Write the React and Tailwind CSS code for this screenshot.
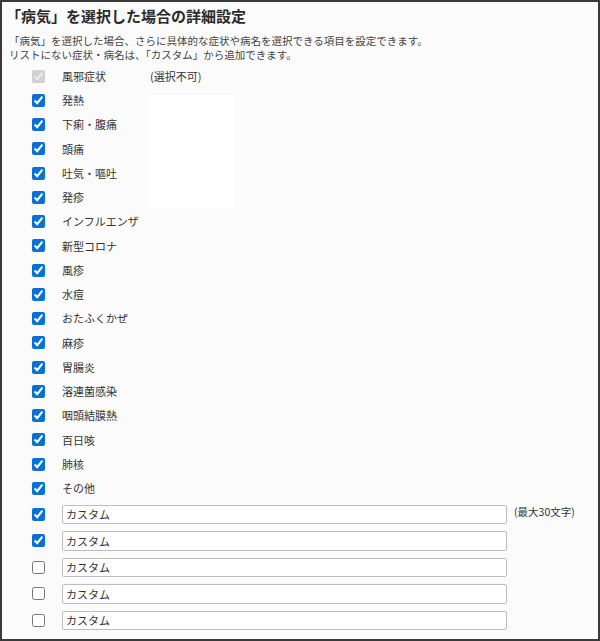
import React from 'react';

const symptoms = [
    '発熱', '下痢・腹痛', '頭痛', '吐気・嘔吐', '発疹', 'インフルエンザ', '新型コロナ',
    '風疹', '水痘', 'おたふくかぜ', '麻疹', '胃腸炎', '溶連菌感染', '咽頭結膜熱',
    '百日咳', '肺核', 'その他',
];

const customs = [true, true, false, false, false];

export default function App() {
    return (
        <div
            className="relative w-[600px] h-[641px] bg-[#fbfbfb] border-2 border-[#3a3a3a] text-[#333] overflow-hidden"
            style={{ fontFamily: '"Noto Sans CJK JP", "Noto Sans", sans-serif' }}
        >
            <div className="pl-[4px] pt-[4px]">
                <h1 className="text-[15px] font-bold leading-[20px] text-[#2b2b2b]">「病気」を選択した場合の詳細設定</h1>
                <div className="mt-[8px] pl-[3px] text-[10.5px] leading-[14px] text-[#444]">
                    <p>「病気」を選択した場合、さらに具体的な症状や病名を選択できる項目を設定できます。</p>
                    <p>リストにない症状・病名は、「カスタム」から追加できます。</p>
                </div>
            </div>

            <div className="mt-[2px] pl-[30px]">
                <div className="flex items-center h-[24.25px] text-[11px]">
                    <input type="checkbox" checked disabled readOnly className="w-[13px] h-[13px] m-0" />
                    <span className="ml-[17px] w-[88px]">風邪症状</span>
                    <span>(選択不可)</span>
                </div>
                {symptoms.map((s) => (
                    <div key={s} className="flex items-center h-[24.25px] text-[11px]">
                        <input type="checkbox" defaultChecked className="w-[13px] h-[13px] m-0 accent-[#0b6fd8]" />
                        <span className="ml-[17px]">{s}</span>
                    </div>
                ))}
            </div>

            <div className="mt-[4px] pl-[30px] flex flex-col gap-[7px]">
                {customs.map((c, i) => (
                    <div key={i} className="flex items-center h-[19.5px] text-[11px]">
                        <input type="checkbox" defaultChecked={c} className="w-[13px] h-[13px] m-0 accent-[#0b6fd8]" />
                        <input
                            type="text"
                            defaultValue="カスタム"
                            className="ml-[17px] w-[445px] h-[19.5px] px-[3px] bg-white border border-[#bdbdbd] rounded-[2px] text-[11px] text-[#333] outline-none"
                        />
                        {i === 0 && <span className="ml-[7px] -mt-[4px] text-[10.5px]">(最大30文字)</span>}
                    </div>
                ))}
            </div>

            <div className="absolute left-[146px] top-[93px] w-[86px] h-[113px] bg-white rounded-[3px]" />
        </div>
    );
}
